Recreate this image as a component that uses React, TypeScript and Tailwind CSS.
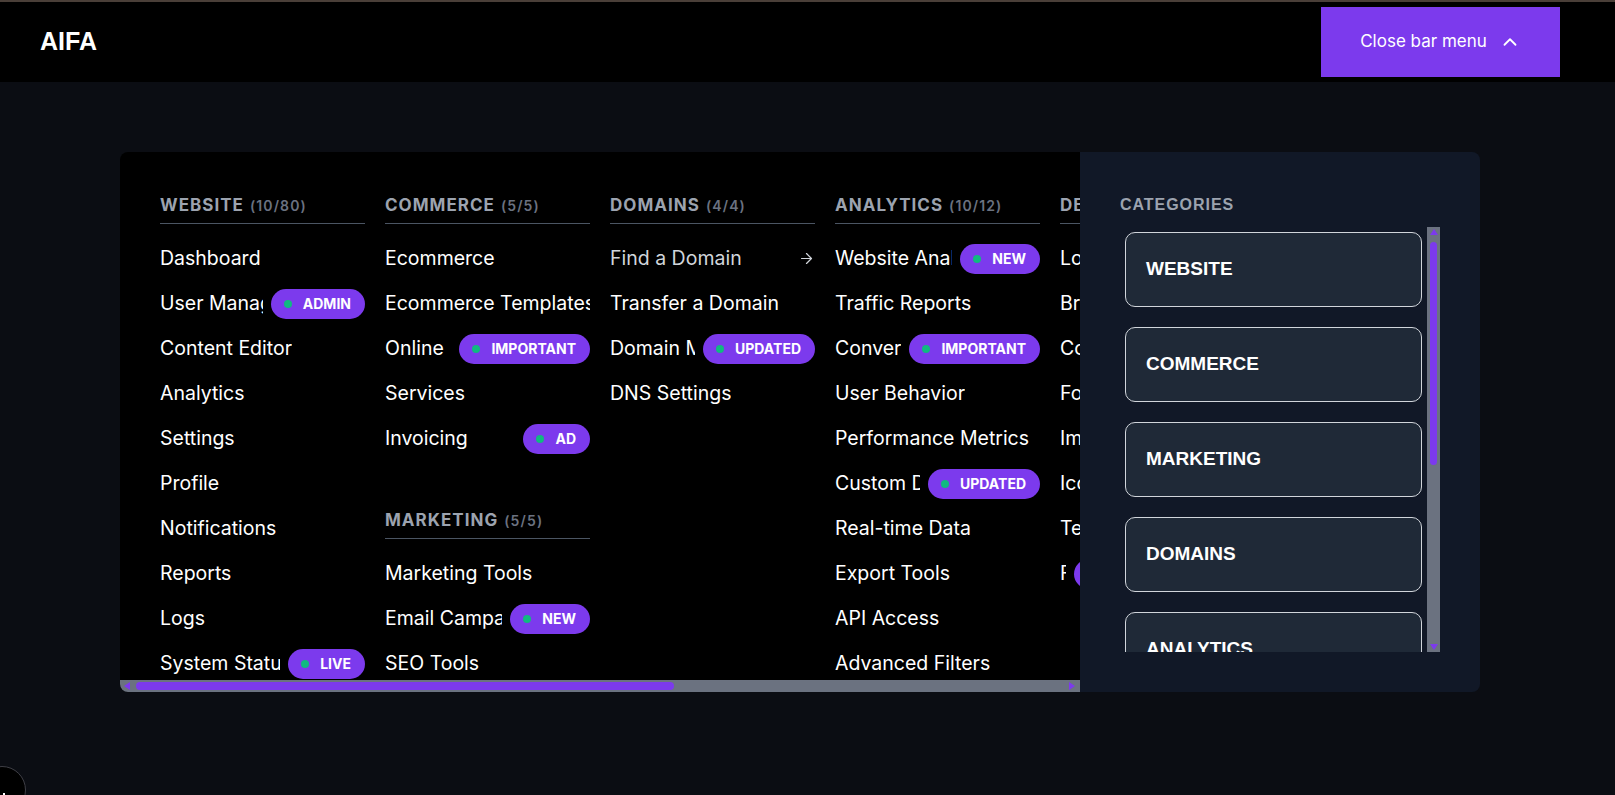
import { ChevronUp, ArrowRight } from "lucide-react"

type Item = { label: string; badge?: string; arrow?: boolean; dim?: boolean }
type Section = { title: string; count: string; items: Item[] }

const columns: Section[][] = [
    [
        {
            title: 'WEBSITE', count: '(10/80)', items: [
                { label: 'Dashboard' },
                { label: 'User Management', badge: 'ADMIN' },
                { label: 'Content Editor' },
                { label: 'Analytics' },
                { label: 'Settings' },
                { label: 'Profile' },
                { label: 'Notifications' },
                { label: 'Reports' },
                { label: 'Logs' },
                { label: 'System Status', badge: 'LIVE' },
            ]
        },
    ],
    [
        {
            title: 'COMMERCE', count: '(5/5)', items: [
                { label: 'Ecommerce' },
                { label: 'Ecommerce Templates' },
                { label: 'Online', badge: 'IMPORTANT' },
                { label: 'Services' },
                { label: 'Invoicing', badge: 'AD' },
            ]
        },
        {
            title: 'MARKETING', count: '(5/5)', items: [
                { label: 'Marketing Tools' },
                { label: 'Email Campaigns', badge: 'NEW' },
                { label: 'SEO Tools' },
                { label: 'Social Media' },
                { label: 'Newsletters' },
            ]
        },
    ],
    [
        {
            title: 'DOMAINS', count: '(4/4)', items: [
                { label: 'Find a Domain', arrow: true, dim: true },
                { label: 'Transfer a Domain' },
                { label: 'Domain Management', badge: 'UPDATED' },
                { label: 'DNS Settings' },
            ]
        },
    ],
    [
        {
            title: 'ANALYTICS', count: '(10/12)', items: [
                { label: 'Website Analytics', badge: 'NEW' },
                { label: 'Traffic Reports' },
                { label: 'Conversion Tracking', badge: 'IMPORTANT' },
                { label: 'User Behavior' },
                { label: 'Performance Metrics' },
                { label: 'Custom Dashboards', badge: 'UPDATED' },
                { label: 'Real-time Data' },
                { label: 'Export Tools' },
                { label: 'API Access' },
                { label: 'Advanced Filters' },
            ]
        },
    ],
    [
        {
            title: 'DESIGN', count: '(8/8)', items: [
                { label: 'Logos' },
                { label: 'Brand Kit' },
                { label: 'Color Palettes' },
                { label: 'Fonts' },
                { label: 'Images' },
                { label: 'Icons' },
                { label: 'Templates' },
                { label: 'Figma Plugins', badge: 'POPULAR TEMPLATE' },
            ]
        },
    ],
    [
        {
            title: 'HOSTING', count: '(5/5)', items: [
                { label: 'Web Hosting' },
                { label: 'Cloud Servers' },
                { label: 'SSL Certificates' },
                { label: 'Backups' },
                { label: 'CDN' },
            ]
        },
    ],
    [
        {
            title: 'SUPPORT', count: '(4/4)', items: [
                { label: 'Help Center' },
                { label: 'Contact Us' },
                { label: 'Community' },
                { label: 'Status' },
            ]
        },
    ],
]

const categories = ['WEBSITE', 'COMMERCE', 'MARKETING', 'DOMAINS', 'ANALYTICS', 'DESIGN', 'HOSTING', 'SUPPORT']

function Badge({ text }: { text: string }) {
    return (
        <span className="shrink-0 h-[30px] rounded-full bg-[#7c3aed] pl-[13px] pr-[14px] flex items-center gap-[11px] text-[14px] font-bold text-white whitespace-nowrap">
            <span className="w-2 h-2 rounded-full bg-[#10b981]"></span>
            {text}
        </span>
    )
}

function MenuSection({ section, first }: { section: Section; first: boolean }) {
    return (
        <div className={first ? '' : 'mt-[46px]'}>
            <div className="border-b border-[#4b5563] pt-[2px] pb-[6px] leading-[22px] whitespace-nowrap">
                <span className="text-[17px] font-bold tracking-[0.06em] text-[#9ca3af]">{section.title}</span>
                <span className="ml-[6px] text-[14px] font-semibold tracking-[0.08em] text-[#6b7280]">{section.count}</span>
            </div>
            <ul className="mt-3">
                {section.items.map((item) => (
                    <li key={item.label} className="h-[45px] flex items-center justify-between gap-2">
                        <span className={`min-w-0 overflow-hidden whitespace-nowrap text-[19.5px] ${item.dim ? 'text-[#d1d5db]' : 'text-white'}`}>
                            {item.label}
                        </span>
                        {item.badge && <Badge text={item.badge} />}
                        {item.arrow && <ArrowRight size={17} strokeWidth={1.75} className="shrink-0 text-[#d1d5db]" />}
                    </li>
                ))}
            </ul>
        </div>
    )
}

function App() {
    return (
        <div className="relative min-h-[795px] bg-[#0b0d13] font-[Inter,sans-serif] overflow-hidden">
            <header className="h-[82px] bg-black border-t-2 border-[#4a3f38] flex items-center justify-between pl-10 pr-[55px]">
                <span className="font-['Liberation_Sans',Arial,sans-serif] text-[25px] font-bold text-white">AIFA</span>
                <button className="w-[239px] h-[70px] bg-[#7c3aed] flex items-center justify-center gap-[12px] text-[17px] text-white">
                    Close bar menu
                    <ChevronUp size={22} strokeWidth={2} />
                </button>
            </header>

            <div className="ml-[120px] mt-[70px] w-[1360px] h-[540px] rounded-lg overflow-hidden flex">
                <div className="w-[960px] h-full bg-black flex flex-col">
                    <div className="flex-1 min-h-0 overflow-hidden">
                        <div className="flex gap-5 p-10 w-max">
                            {columns.map((col, i) => (
                                <div key={i} className="w-[205px] shrink-0">
                                    {col.map((section, j) => (
                                        <MenuSection key={section.title} section={section} first={j === 0} />
                                    ))}
                                </div>
                            ))}
                        </div>
                    </div>
                    {/* horizontal scrollbar */}
                    <div className="h-[12px] shrink-0 bg-[#6b7280] flex items-center pl-[4px] pr-[5px]">
                        <svg width="6" height="8" viewBox="0 0 6 8"><path d="M6 0 0 4 6 8Z" fill="#7c3aed" /></svg>
                        <div className="ml-[6px] w-[538px] h-[8px] rounded-full bg-[#7c3aed]"></div>
                        <div className="flex-1"></div>
                        <svg width="6" height="8" viewBox="0 0 6 8"><path d="M0 0 6 4 0 8Z" fill="#7c3aed" /></svg>
                    </div>
                </div>

                <aside className="w-[400px] h-full bg-[#111827] p-10 flex flex-col font-['Liberation_Sans',Arial,sans-serif]">
                    <h3 className="pt-[2px] text-[16px] font-bold tracking-[0.06em] leading-[22px] text-[#9ca3af]">CATEGORIES</h3>
                    <div className="mt-[11px] h-[425px] flex">
                        <div className="flex-1 min-w-0 overflow-hidden p-[5px] flex flex-col gap-5">
                            {categories.map((c) => (
                                <button key={c} className="shrink-0 h-[75px] rounded-[10px] border border-[#d1d5db] bg-[#1f2937] px-5 flex items-center text-[19px] font-bold text-white text-left">
                                    {c}
                                </button>
                            ))}
                        </div>
                        {/* vertical scrollbar */}
                        <div className="w-[13px] shrink-0 bg-[#6b7280] flex flex-col items-center pt-[2px] pb-[2px]">
                            <svg width="8" height="6" viewBox="0 0 8 6"><path d="M0 6 4 0 8 6Z" fill="#7c3aed" /></svg>
                            <div className="mt-[7px] w-[7px] h-[223px] rounded-full bg-[#7c3aed]"></div>
                            <div className="flex-1"></div>
                            <svg width="8" height="6" viewBox="0 0 8 6"><path d="M0 0 4 6 8 0Z" fill="#7c3aed" /></svg>
                        </div>
                    </div>
                </aside>
            </div>

            <div className="absolute left-[-22px] top-[766px] w-[48px] h-[48px] rounded-full bg-black border border-[#3f3f46] flex items-center justify-end pr-[20px]">
                <span className="w-[2px] h-[8px] bg-white mt-[14px]"></span>
            </div>
        </div>
    )
}

export default App
